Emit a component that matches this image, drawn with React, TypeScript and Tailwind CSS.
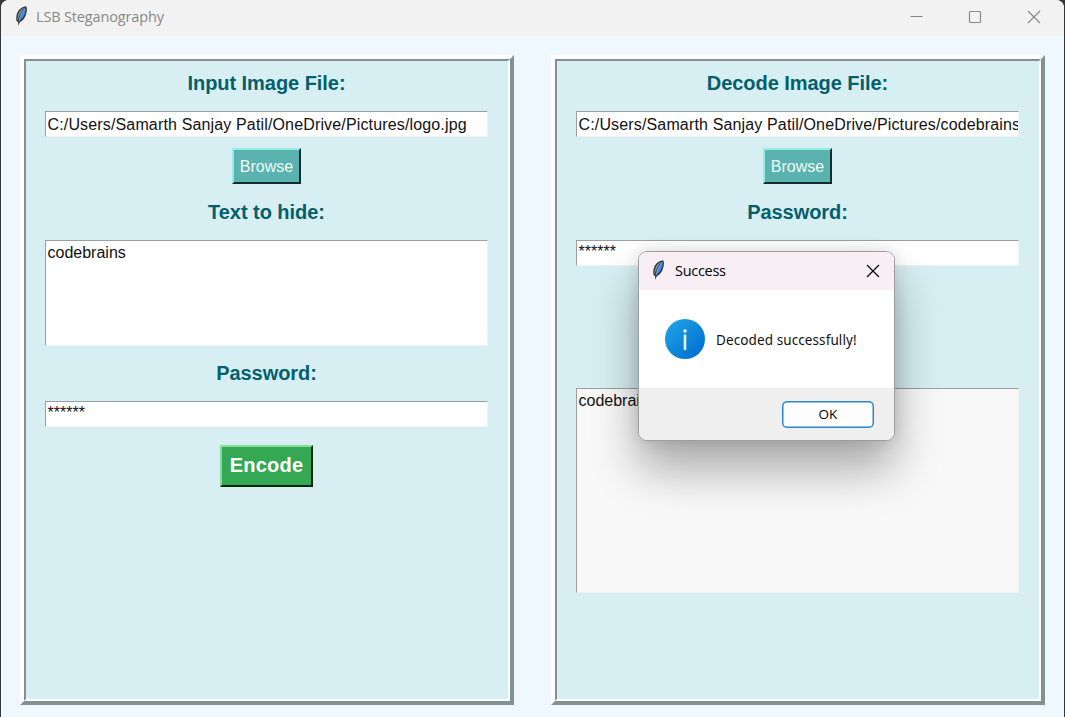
import type { ReactNode } from "react";

function Feather({ className }: { className: string }) {
  return (
    <svg viewBox="0 0 13 20" className={className}>
      <path d="M11 .3C7.500 .6 3.600 3.500 2.200 7C1.100 10 1 13 1.600 15.300L2.900 15.800L3.500 19.700L4.700 16.200C7.800 14.600 9.400 12.600 10.500 10C12 6.500 12.600 2.200 11 .3Z" fill="#30363e" />
      <path d="M10.300 1.500C9 2.800 6.200 6 4.900 9.500C4.100 12 3.800 13.500 3.800 15C6.800 13.200 8.500 11.300 9.400 8.800C10.700 5.800 11.200 3.200 10.300 1.500Z" fill="#4284d4" />
      <path d="M9.600 1.600C6.500 3 4.100 5.500 3.200 8.500C2.500 11 2.300 13 2.600 14.500C3.700 10 6.200 5 9.600 1.600Z" fill="#8d949c" />
      <path d="M9.700 3C7 7 5.300 10.500 4.200 15" fill="none" stroke="#78ade9" strokeWidth=".8" />
    </svg>
  );
}

function Panel({ children }: { children: ReactNode }) {
  return (
    <section className="h-[650px] w-[494px] border-4 border-t-white border-l-white border-r-[#829293] border-b-[#829293]">
      <div className="flex h-full flex-col items-start border-2 border-t-[#829293] border-l-[#829293] border-r-white border-b-white bg-[#d7eff2] pl-[19px]">
        <div className="flex w-[443px] flex-col items-center">{children}</div>
      </div>
    </section>
  );
}

function Heading({ children, className }: { children: ReactNode; className: string }) {
  return (
    <h2 className={`h-6 text-[20px] leading-6 font-bold tracking-[-0.05px] whitespace-nowrap text-[#045f6c] ${className}`}>
      {children}
    </h2>
  );
}

function Entry({ children, className }: { children: ReactNode; className: string }) {
  return (
    <div className={`w-[443px] shrink-0 overflow-hidden border border-t-[#9b9fa0] border-l-[#9b9fa0] border-r-[#eef2f2] border-b-[#eef2f2] pl-[1.5px] text-[16px] whitespace-nowrap text-[#111] ${className}`}>
      {children}
    </div>
  );
}

function Browse() {
  return (
    <button className="mt-[11px] h-9 w-[69px] shrink-0 border-2 border-t-[#93eee4] border-l-[#93eee4] border-r-[#132e2c] border-b-[#132e2c] bg-[#5ab3ae] pt-px text-[16px] text-[#f0fbfa]">
      Browse
    </button>
  );
}

function Close({ className }: { className: string }) {
  return (
    <svg viewBox="0 0 14 14" className={className} fill="none" stroke="currentColor" strokeWidth="1.2">
      <path d="M1 1L13 13M13 1L1 13" />
    </svg>
  );
}

export default function App() {
  return (
    <div className="relative h-[717px] w-[1065px] overflow-hidden bg-[#37363b] pr-px pl-px font-['Liberation_Sans',Arial,sans-serif]">
      <main className="h-full overflow-hidden rounded-t-[8px] bg-[#eff7ff]">
        <header className="flex h-9 items-center bg-[#f2f2f2] pl-[14px] text-[#888]">
          <Feather className="mt-[-5px] h-5 w-[13px]" />
          <h1 className="mt-[-2px] ml-2 flex-1 font-['Open_Sans','Noto_Sans',sans-serif] text-[14.5px] tracking-[-0.15px]">
            LSB Steganography
          </h1>
          <div className="mt-[-2px] flex items-center gap-[45px] pr-[23px]">
            <svg className="h-[14px] w-[14px]" viewBox="0 0 14 14"><path d="M1.500 6.500H13.500" stroke="currentColor" /></svg>
            <svg className="h-[14px] w-[14px]" viewBox="0 0 14 14" fill="none"><rect x="1.500" y="1.500" width="11" height="11" rx="1" stroke="currentColor" strokeWidth="1.200" /></svg>
            <Close className="h-[14px] w-[14px]" />
          </div>
        </header>
        <div className="flex gap-[37px] pt-[19px] pl-[19px]">
          <Panel>
            <Heading className="mt-[10px]">Input Image File:</Heading>
            <Entry className="mt-4 h-[26px] bg-white leading-[25px] tracking-[0.15px]">C:/Users/Samarth Sanjay Patil/OneDrive/Pictures/logo.jpg</Entry>
            <Browse />
            <Heading className="mt-4">Text to hide:</Heading>
            <Entry className="mt-4 h-[106px] bg-white leading-6">codebrains</Entry>
            <Heading className="mt-[15px]">Password:</Heading>
            <Entry className="mt-4 h-[26px] bg-white leading-[22px]">******</Entry>
            <button className="mt-[18px] h-[42px] w-[93px] shrink-0 border-2 border-t-[#83df98] border-l-[#83df98] border-r-[#07250e] border-b-[#07250e] bg-[#35a853] pb-[2px] text-[20px] font-bold tracking-[0.2px] text-white">
              Encode
            </button>
          </Panel>
          <Panel>
            <Heading className="mt-[10px]">Decode Image File:</Heading>
            <Entry className="mt-4 h-[26px] bg-white leading-[25px] tracking-[0.15px]">C:/Users/Samarth Sanjay Patil/OneDrive/Pictures/codebrains</Entry>
            <Browse />
            <Heading className="mt-4">Password:</Heading>
            <Entry className="mt-4 h-[26px] bg-white leading-[22px]">******</Entry>
            <Entry className="mt-[122px] h-[205px] bg-[#f8f8f8] leading-6">codebrains</Entry>
          </Panel>
        </div>
      </main>
      <div role="dialog" className="absolute top-[251px] left-[638px] flex h-[190px] w-[257px] flex-col overflow-hidden rounded-[9px] border border-[#9c9fa0] bg-white font-['Open_Sans','Noto_Sans',sans-serif] shadow-[0_28px_46px_rgba(0,0,0,0.32),0_0_16px_rgba(0,0,0,0.12)]">
        <div className="flex h-[38px] shrink-0 items-center bg-[#f8eff4] pr-[14px] pl-[13px] text-black">
          <Feather className="mt-[-2px] h-5 w-[13px]" />
          <div className="ml-[10px] flex-1 text-[14.5px] tracking-[-0.3px]">Success</div>
          <Close className="h-[14px] w-[14px]" />
        </div>
        <div className="flex h-[98px] shrink-0 items-center pl-[26px]">
          <svg viewBox="0 0 40 40" className="h-10 w-10">
            <defs>
              <linearGradient id="info" x1="0" y1="0" x2="1" y2="1">
                <stop offset=".1" stopColor="#20a0e5" />
                <stop offset=".9" stopColor="#0070d0" />
              </linearGradient>
            </defs>
            <circle cx="20" cy="20" r="20" fill="url(#info)" />
            <circle cx="20" cy="12" r="1.800" fill="#e6f5ff" />
            <path d="M20 16.500V30" stroke="#e6f5ff" strokeWidth="2.600" strokeLinecap="round" />
          </svg>
          <p className="mt-[2px] ml-[11px] font-['Noto_Sans',sans-serif] text-[13.500px] tracking-[0.1px] whitespace-nowrap text-[#111]">Decoded successfully!</p>
        </div>
        <div className="flex flex-1 items-center justify-end bg-[#efefef] pr-5">
          <button className="h-[27px] w-[92px] rounded-[5px] bg-[#fdfdfd] text-[13.500px] text-black ring-[1.500px] ring-[#2b86d0] ring-inset">OK</button>
        </div>
      </div>
    </div>
  );
}
